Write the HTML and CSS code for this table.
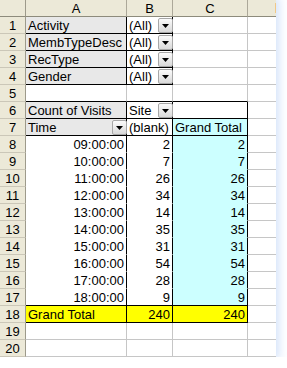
FILE: index.html
```html
<!DOCTYPE html>
<html>
<head>
<meta charset="utf-8">
<link rel="stylesheet" href="styles.css">
</head>
<body>
<div class="sheet">
  <div class="grid">
    <div class="c corner"></div><div class="c ch">A</div><div class="c ch">B</div><div class="c ch">C</div><div class="c ch chd"><span class="tick"></span></div>

    <div class="c rn">1</div><div class="c fld">Activity</div><div class="c pv">(All)<span class="dd"><svg width="7" height="4" viewBox="0 0 7 4"><polygon points="0,0 7,0 3.5,4" /></svg></span></div><div class="c"></div><div class="c d"></div>
    <div class="c rn">2</div><div class="c fld">MembTypeDesc</div><div class="c pv">(All)<span class="dd"><svg width="7" height="4" viewBox="0 0 7 4"><polygon points="0,0 7,0 3.5,4" /></svg></span></div><div class="c"></div><div class="c d"></div>
    <div class="c rn">3</div><div class="c fld">RecType</div><div class="c pv">(All)<span class="dd"><svg width="7" height="4" viewBox="0 0 7 4"><polygon points="0,0 7,0 3.5,4" /></svg></span></div><div class="c"></div><div class="c d"></div>
    <div class="c rn">4</div><div class="c fld">Gender</div><div class="c pv">(All)<span class="dd"><svg width="7" height="4" viewBox="0 0 7 4"><polygon points="0,0 7,0 3.5,4" /></svg></span></div><div class="c"></div><div class="c d"></div>
    <div class="c rn">5</div><div class="c tb"></div><div class="c tb"></div><div class="c tb"></div><div class="c d"></div>

    <div class="c rn">6</div><div class="c fld">Count of Visits</div><div class="c bx">Site<span class="dd"><svg width="7" height="4" viewBox="0 0 7 4"><polygon points="0,0 7,0 3.5,4" /></svg></span></div><div class="c bx"></div><div class="c d"></div>
    <div class="c rn">7</div><div class="c fld">Time<span class="dd"><svg width="7" height="4" viewBox="0 0 7 4"><polygon points="0,0 7,0 3.5,4" /></svg></span></div><div class="c bx">(blank)</div><div class="c bx cy">Grand Total</div><div class="c d"></div>

    <div class="c rn">8</div><div class="c in r">09:00:00</div><div class="c in r">2</div><div class="c gc r">2</div><div class="c d"></div>
    <div class="c rn">9</div><div class="c in r">10:00:00</div><div class="c in r">7</div><div class="c gc r">7</div><div class="c d"></div>
    <div class="c rn">10</div><div class="c in r">11:00:00</div><div class="c in r">26</div><div class="c gc r">26</div><div class="c d"></div>
    <div class="c rn">11</div><div class="c in r">12:00:00</div><div class="c in r">34</div><div class="c gc r">34</div><div class="c d"></div>
    <div class="c rn">12</div><div class="c in r">13:00:00</div><div class="c in r">14</div><div class="c gc r">14</div><div class="c d"></div>
    <div class="c rn">13</div><div class="c in r">14:00:00</div><div class="c in r">35</div><div class="c gc r">35</div><div class="c d"></div>
    <div class="c rn">14</div><div class="c in r">15:00:00</div><div class="c in r">31</div><div class="c gc r">31</div><div class="c d"></div>
    <div class="c rn">15</div><div class="c in r">16:00:00</div><div class="c in r">54</div><div class="c gc r">54</div><div class="c d"></div>
    <div class="c rn">16</div><div class="c in r">17:00:00</div><div class="c in r">28</div><div class="c gc r">28</div><div class="c d"></div>
    <div class="c rn">17</div><div class="c in last r">18:00:00</div><div class="c in last r">9</div><div class="c gc last r">9</div><div class="c d"></div>

    <div class="c rn">18</div><div class="c tot">Grand Total</div><div class="c tot r">240</div><div class="c tot r">240</div><div class="c d"></div>
    <div class="c rn">19</div><div class="c"></div><div class="c"></div><div class="c"></div><div class="c d"></div>
    <div class="c rn">20</div><div class="c"></div><div class="c"></div><div class="c"></div><div class="c d"></div>
  </div>
</div>
</body>
</html>
```

FILE: styles.css
```css
html, body {
  margin: 0;
  padding: 0;
  background: #ffffff;
}

.sheet {
  width: 276px;
  box-shadow: 0 0 9px 3px rgba(175, 202, 245, 0.55);
}

.grid {
  display: grid;
  grid-template-columns: 26px 101px 46px 75px 28px;
  grid-auto-rows: 17px;
  background: #ffffff;
  font-family: "Liberation Sans", Arial, sans-serif;
  font-size: 13px;
  color: #000000;
}

.c {
  box-sizing: border-box;
  position: relative;
  border-right: 1px solid #c6c6c6;
  border-bottom: 1px solid #c6c6c6;
  padding: 1px 2px 0 2px;
  line-height: 15px;
  white-space: nowrap;
  overflow: visible;
}

.d {
  border-right: none;
}

.corner,
.ch {
  background: #ece9d8;
  border-right: 1px solid #aca899;
  border-bottom: 1px solid #8d8b7c;
  text-align: center;
}

.corner {
  border-right: 1px solid #9d9a8b;
}

.chd {
  border-right: none;
}

.tick {
  position: absolute;
  right: 0;
  top: 3px;
  width: 1px;
  height: 10px;
  background: #f1c887;
}

.rn {
  background: #ece9d8;
  border-right: 1px solid #9d9a8b;
  border-bottom: 1px solid #cbc7b8;
  text-align: center;
}

.fld {
  background: #e8e8e8;
  border-right: 1px solid #000000;
  border-bottom: 1px solid #000000;
}

.pv,
.bx {
  border-right: 1px solid #000000;
  border-bottom: 1px solid #000000;
}

.tb {
  border-bottom: 1px solid #000000;
}

.cy {
  background: #ccffff;
}

.in {
  border-right: 1px solid #000000;
  border-bottom: 1px solid #ffffff;
}

.gc {
  background: #ccffff;
  border-right: 1px solid #000000;
  border-bottom: 1px solid #ccffff;
}

.last {
  border-bottom: 1px solid #000000;
}

.tot {
  background: #ffff00;
  border-right: 1px solid #000000;
  border-bottom: 1px solid #000000;
}

.r {
  text-align: right;
}

.dd {
  position: absolute;
  right: -1px;
  top: 1px;
  box-sizing: border-box;
  width: 15px;
  height: 15px;
  border: 1px solid #a7a7a7;
  border-radius: 2px;
  background: linear-gradient(#fbfbfb, #d9d9d9);
  display: flex;
  align-items: center;
  justify-content: center;
}

.dd svg {
  display: block;
  fill: #000000;
}
```
